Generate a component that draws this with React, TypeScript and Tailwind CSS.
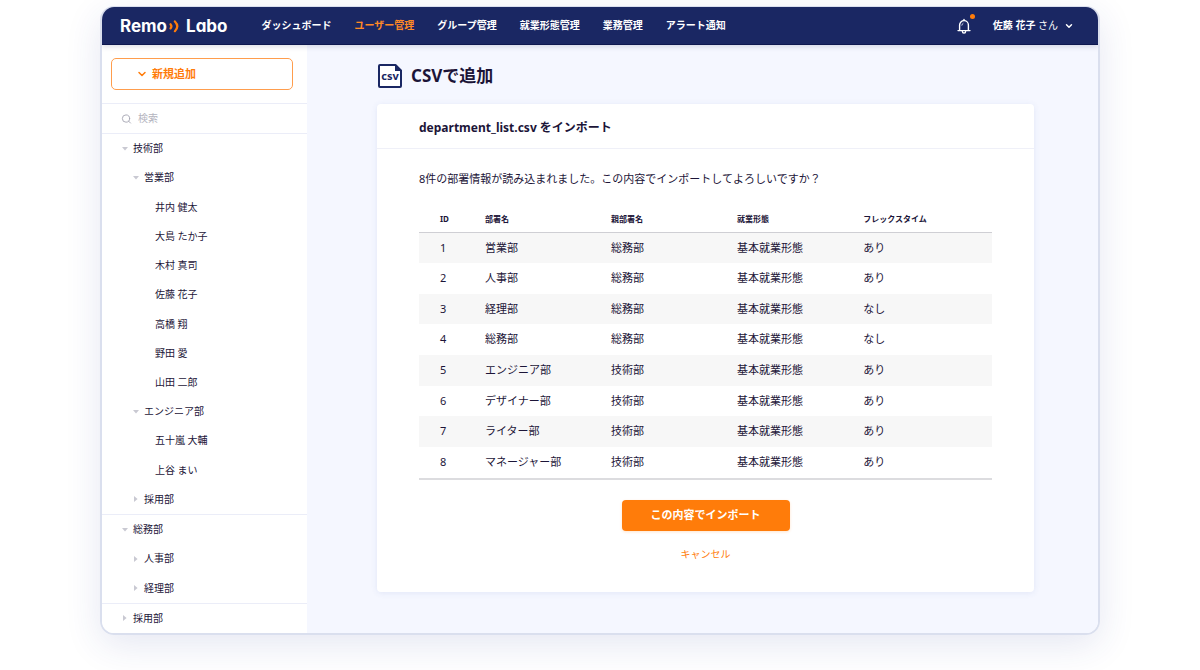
import { clsx } from "clsx";
import { ChevronDown, Search } from "lucide-react";

interface TreeItem {
	label: string;
	level: 0 | 1 | 2;
	state?: "open" | "closed";
}

interface Department {
	id: number;
	name: string;
	parent: string;
	workStyle: string;
	flex: string;
}

const NAV_ITEMS = [
	"ダッシュボード",
	"ユーザー管理",
	"グループ管理",
	"就業形態管理",
	"業務管理",
	"アラート通知",
];

const ACTIVE_NAV = "ユーザー管理";

const TREE: TreeItem[] = [
	{ label: "技術部", level: 0, state: "open" },
	{ label: "営業部", level: 1, state: "open" },
	{ label: "井内 健太", level: 2 },
	{ label: "大島 たか子", level: 2 },
	{ label: "木村 真司", level: 2 },
	{ label: "佐藤 花子", level: 2 },
	{ label: "高橋 翔", level: 2 },
	{ label: "野田 愛", level: 2 },
	{ label: "山田 二郎", level: 2 },
	{ label: "エンジニア部", level: 1, state: "open" },
	{ label: "五十嵐 大輔", level: 2 },
	{ label: "上谷 まい", level: 2 },
	{ label: "採用部", level: 1, state: "closed" },
	{ label: "総務部", level: 0, state: "open" },
	{ label: "人事部", level: 1, state: "closed" },
	{ label: "経理部", level: 1, state: "closed" },
	{ label: "採用部", level: 0, state: "closed" },
];

const COLUMNS = ["ID", "部署名", "親部署名", "就業形態", "フレックスタイム"];

const DEPARTMENTS: Department[] = [
	{ id: 1, name: "営業部", parent: "総務部", workStyle: "基本就業形態", flex: "あり" },
	{ id: 2, name: "人事部", parent: "総務部", workStyle: "基本就業形態", flex: "あり" },
	{ id: 3, name: "経理部", parent: "総務部", workStyle: "基本就業形態", flex: "なし" },
	{ id: 4, name: "総務部", parent: "総務部", workStyle: "基本就業形態", flex: "なし" },
	{ id: 5, name: "エンジニア部", parent: "技術部", workStyle: "基本就業形態", flex: "あり" },
	{ id: 6, name: "デザイナー部", parent: "技術部", workStyle: "基本就業形態", flex: "あり" },
	{ id: 7, name: "ライター部", parent: "技術部", workStyle: "基本就業形態", flex: "あり" },
	{ id: 8, name: "マネージャー部", parent: "技術部", workStyle: "基本就業形態", flex: "あり" },
];

function Logo() {
	return (
		<a
			href="#"
			className="flex items-center font-['Inter',sans-serif] text-[17px] leading-5 font-bold text-white [font-feature-settings:'cv11']"
		>
			Remo
			<svg
				viewBox="0 0 11 14"
				className="mr-1.5 ml-px h-3.5 w-3"
				fill="none"
				stroke="#ff7c0a"
				strokeLinecap="round"
				aria-hidden="true"
			>
				<path d="M2 5.2q1.9 2.1 0 4.2" strokeWidth="2.2" />
				<path d="M6.4 2.4q4.8 4.9 0 9.8" strokeWidth="2.2" />
			</svg>
			Labo
		</a>
	);
}

function BellIcon() {
	return (
		<svg
			viewBox="0 0 14 16"
			className="h-4 w-3.5"
			fill="none"
			stroke="#fff"
			strokeWidth="1.4"
			strokeLinejoin="round"
			strokeLinecap="round"
			aria-hidden="true"
		>
			<path d="M7 1.4v1" />
			<path d="M2.6 12V7a4.4 4.4 0 0 1 8.8 0v5" />
			<path d="M1 12.6h12" />
			<path d="M5.4 13.4a1.6 1.6 0 0 0 3.2 0" />
			<path d="M4.8 7.2A2.2 2.2 0 0 1 6 5.4" strokeWidth="0.8" />
		</svg>
	);
}

function CsvIcon() {
	return (
		<svg viewBox="0 0 26 26" className="h-[26px] w-[26px]" aria-hidden="true">
			<path
				d="M3 2h15.5L24 7.5V23a1 1 0 0 1-1 1H3a1 1 0 0 1-1-1V3a1 1 0 0 1 1-1z"
				fill="#fff"
				stroke="#1a2763"
				strokeWidth="2"
				strokeLinejoin="round"
			/>
			<path d="M18 2v6h6z" fill="#1a2763" />
			<text
				x="13"
				y="17"
				textAnchor="middle"
				fontSize="11"
				fontWeight="700"
				fill="#1a2763"
				fontFamily="'Noto Sans', sans-serif"
			>
				csv
			</text>
		</svg>
	);
}

function Caret({ state }: { state: "open" | "closed" }) {
	return (
		<svg viewBox="0 0 6 6" className="h-1.5 w-1.5" fill="#c9c9d2" aria-hidden="true">
			<path d={state === "open" ? "M0 1h6L3 4.6z" : "M1 0v6l3.6-3z"} />
		</svg>
	);
}

function Header() {
	return (
		<header className="relative flex h-[38px] items-center border-b border-[#0e1850] bg-[#1a2763] pr-6 pl-[18px] text-white shadow-[0_2px_5px_rgba(26,39,99,0.15)]">
			<Logo />
			<nav className="ml-[34px] flex gap-[23px] text-[10px] font-bold whitespace-nowrap">
				{NAV_ITEMS.map((item) => (
					<a
						key={item}
						href="#"
						className={clsx(item === ACTIVE_NAV && "text-[#ff8a26]")}
					>
						{item}
					</a>
				))}
			</nav>
			<button type="button" aria-label="通知" className="relative ml-auto">
				<BellIcon />
				<span className="absolute -top-1 -right-1 h-[5px] w-[5px] rounded-full bg-[#ff7c0a]" />
			</button>
			<button type="button" className="ml-[22px] flex items-center gap-1.5 text-[10px]">
				<span>
					<b className="font-bold">佐藤 花子</b> さん
				</span>
				<ChevronDown size={10} strokeWidth={3.5} />
			</button>
		</header>
	);
}

function Sidebar() {
	return (
		<aside className="flex w-[205px] shrink-0 flex-col bg-white">
			<div className="pt-[13px] pr-3.5 pb-[13px] pl-[9px]">
				<button
					type="button"
					className="flex h-8 w-full items-center gap-1 rounded-[5px] border border-[#ff9d4d] pl-6 text-[11px] font-bold text-[#ff7c0a]"
				>
					<ChevronDown size={12} strokeWidth={3} />
					新規追加
				</button>
			</div>
			<label className="flex h-[31px] items-center gap-1.5 border-y border-[#ebedf8] pl-[19px] text-[#a5a5b2]">
				<Search size={12} strokeWidth={2} />
				<input
					type="text"
					aria-label="検索"
					placeholder="検索"
					className="w-full bg-transparent text-[10px] outline-none placeholder:text-[#b4b4be]"
				/>
			</label>
			<ul className="flex flex-1 flex-col text-[10px]">
				{TREE.map((item, i) => (
					<li
						key={i}
						className={clsx(
							"flex flex-auto items-center gap-[5px]",
							item.level === 0 && "pl-5",
							item.level === 1 && "pl-[31px]",
							item.level === 2 && "pl-[53px]",
							item.level === 0 && i > 0 && "border-t border-[#ebedf8]",
						)}
					>
						{item.state && <Caret state={item.state} />}
						{item.label}
					</li>
				))}
			</ul>
		</aside>
	);
}

function DepartmentTable() {
	return (
		<table className="mt-[18px] h-[274px] w-full table-fixed border-b-2 border-[#dcdcdf] text-left text-[11px]">
			<colgroup>
				<col className="w-[66px]" />
				<col className="w-[22%]" />
				<col className="w-[22%]" />
				<col className="w-[22%]" />
				<col />
			</colgroup>
			<thead>
				<tr className="h-[26px] border-b border-[#cfcfd4] text-[8px]">
					{COLUMNS.map((column) => (
						<th key={column} className="p-0 font-bold first:pl-[21px]">
							{column}
						</th>
					))}
				</tr>
			</thead>
			<tbody>
				{DEPARTMENTS.map((dept) => (
					<tr key={dept.id} className="odd:bg-[#f7f7f7]">
						<td className="p-0 pl-[21px]">{dept.id}</td>
						<td className="p-0">{dept.name}</td>
						<td className="p-0">{dept.parent}</td>
						<td className="p-0">{dept.workStyle}</td>
						<td className="p-0">{dept.flex}</td>
					</tr>
				))}
			</tbody>
		</table>
	);
}

export default function App() {
	return (
		<div className="bg-white px-4 pt-[6px] pb-[35px] font-['Noto_Sans','Noto_Sans_CJK_JP',sans-serif] text-[#1c1538]">
			<div className="mx-auto w-full max-w-[1000px] overflow-hidden rounded-[14px] border-2 border-t border-[#dadfee] shadow-[0_10px_36px_rgba(40,60,150,0.12)]">
				<Header />
				<div className="flex">
					<Sidebar />
					<main className="min-w-0 flex-1 bg-[#f5f7ff] pt-[18px] pr-16 pb-[41px] pl-[70px]">
						<h1 className="flex items-center gap-2 text-[17px] leading-[26px] font-bold">
							<CsvIcon />
							CSVで追加
						</h1>
						<section className="mt-[15px] rounded-[4px] bg-white pb-[29px] shadow-[0_1px_6px_rgba(60,90,180,0.1)]">
							<h2 className="border-b border-[#eff0f8] px-[42px] pt-1 text-[12px] leading-10 font-bold">
								department_list.csv をインポート
							</h2>
							<div className="px-[42px] pt-[21px]">
								<p className="text-[11px] leading-[18px]">
									8件の部署情報が読み込まれました。この内容でインポートしてよろしいですか？
								</p>
								<DepartmentTable />
								<div className="mt-5 flex flex-col items-center gap-3.5">
									<button
										type="button"
										className="h-[31px] w-[168px] rounded-[4px] bg-[#ff7c0a] text-[11px] font-bold text-white shadow-[0_1px_3px_rgba(255,124,10,0.2)]"
									>
										この内容でインポート
									</button>
									<a href="#" className="text-[10px] leading-[18px] text-[#ff7c0a]">
										キャンセル
									</a>
								</div>
							</div>
						</section>
					</main>
				</div>
			</div>
		</div>
	);
}
